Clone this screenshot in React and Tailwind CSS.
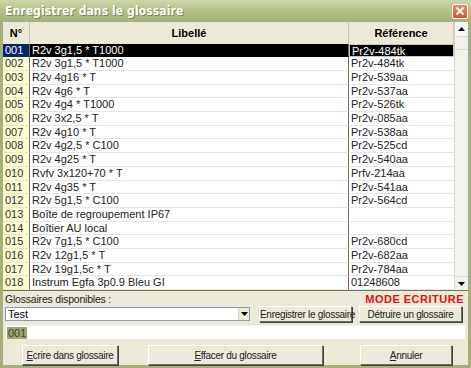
import React from 'react'

const rows = [
  ['001', 'R2v 3g1,5 * T1000', 'Pr2v-484tk'],
  ['002', 'R2v 3g1,5 * T1000', 'Pr2v-484tk'],
  ['003', 'R2v 4g16 * T', 'Pr2v-539aa'],
  ['004', 'R2v 4g6 * T', 'Pr2v-537aa'],
  ['005', 'R2v 4g4 * T1000', 'Pr2v-526tk'],
  ['006', 'R2v 3x2,5 * T', 'Pr2v-085aa'],
  ['007', 'R2v 4g10 * T', 'Pr2v-538aa'],
  ['008', 'R2v 4g2,5 * C100', 'Pr2v-525cd'],
  ['009', 'R2v 4g25 * T', 'Pr2v-540aa'],
  ['010', 'Rvfv 3x120+70 * T', 'Prfv-214aa'],
  ['011', 'R2v 4g35 * T', 'Pr2v-541aa'],
  ['012', 'R2v 5g1,5 * C100', 'Pr2v-564cd'],
  ['013', 'Boîte de regroupement IP67', ''],
  ['014', 'Boîtier AU local', ''],
  ['015', 'R2v 7g1,5 * C100', 'Pr2v-680cd'],
  ['016', 'R2v 12g1,5 * T', 'Pr2v-682aa'],
  ['017', 'R2v 19g1,5c * T', 'Pr2v-784aa'],
  ['018', 'Instrum Egfa 3p0.9 Bleu GI', '01248608'],
]

function Btn({ children, className }) {
  return (
    <button
      className={
        'h-full px-0 whitespace-nowrap bg-[#ece9d8] text-[10px] tracking-[-0.3px] text-[#222] border border-t-white border-l-white border-r-[#716f64] border-b-[#716f64] shadow-[1px_1px_0_#404040] ' +
        className
      }
    >
      {children}
    </button>
  )
}

export default function App() {
  return (
    <div
      className="w-[471px] h-[368px] bg-[#a3b07a] flex flex-col overflow-hidden"
      style={{ fontFamily: '"Liberation Sans", Arial, sans-serif' }}
    >
      {/* title bar */}
      <div className="h-[22px] flex items-center justify-between pl-[5px] pr-[3px] bg-gradient-to-b from-[#cdd5ab] via-[#b3bf88] to-[#a5b27a]">
        <span className="text-white font-bold text-[12px] tracking-[0.1px] [text-shadow:1px_1px_0_#7d8857]" style={{ fontFamily: '"DejaVu Sans Condensed", "DejaVu Sans", sans-serif' }}>
          Enregistrer dans le glossaire
        </span>
        <div className="w-[16px] h-[15px] rounded-[2px] border border-white bg-gradient-to-b from-[#e98a66] to-[#d4542f] flex items-center justify-center">
          <svg width="10" height="10" viewBox="0 0 10 10">
            <path d="M1.5 1.5 L8.5 8.5 M8.5 1.5 L1.5 8.5" stroke="white" strokeWidth="2" />
          </svg>
        </div>
      </div>

      {/* body */}
      <div className="flex-1 mx-[3px] mb-[3px] bg-[#ece9d8] flex flex-col">
        {/* table */}
        <div className="h-[269px] flex border-b border-[#6e7a4d] overflow-hidden">
          <div className="flex-1 flex flex-col overflow-hidden">
            {/* header */}
            <div className="h-[24px] flex text-[11px] font-bold text-black bg-[#ece9d8]">
              <div className="w-[27px] flex items-center justify-center border-r border-[#c9c6b8]">N°</div>
              <div className="w-[319px] flex items-center justify-center border-r border-[#c9c6b8]">Libellé</div>
              <div className="flex-1 flex items-center justify-center border-r border-[#c9c6b8]">Référence</div>
            </div>
            {rows.map((r, i) => {
              const sel = i === 0
              return (
                <div key={r[0]} className="h-[13.7px] shrink-0 flex text-[11px] leading-[13px]">
                  <div
                    className={
                      'w-[27px] pl-[2px] border-r border-[#6d6d6d] border-b ' +
                      (sel ? 'bg-[#0a246a] text-white border-b-[#0a246a]' : 'bg-[#fdfbd1] text-[#333] border-b-[#ebe8c0]')
                    }
                  >
                    {r[0]}
                  </div>
                  <div
                    className={
                      'w-[319px] pl-[2px] border-r border-[#6d6d6d] border-b whitespace-nowrap ' +
                      (sel ? 'bg-black text-white border-b-black' : 'bg-white text-[#222] border-b-[#e6e6e6]')
                    }
                  >
                    {r[1]}
                  </div>
                  <div
                    className={
                      'flex-1 pl-[2px] border-b whitespace-nowrap ' +
                      (sel ? 'bg-black text-white border border-[#c8c8c8]' : 'bg-white text-[#222] border-b-[#e6e6e6]')
                    }
                  >
                    {r[2]}
                  </div>
                </div>
              )
            })}
          </div>
          {/* scrollbar */}
          <div className="w-[14px] bg-[#f3f2ec] border-l border-[#d8d6c8] flex flex-col justify-between">
            <div>
              <div className="h-[15px] bg-[#f6f5ef] border-b border-[#dcdacd] flex items-center justify-center">
                <svg width="7" height="4" viewBox="0 0 7 4"><path d="M0 4 L3.5 0 L7 4Z" fill="#000" /></svg>
              </div>
              <div className="h-[13px] border-b border-[#dcdacd] bg-[#f1f0ea]" />
            </div>
            <div className="h-[14px] flex items-center justify-center border-t border-[#dcdacd]">
              <svg width="7" height="4" viewBox="0 0 7 4"><path d="M0 0 L3.5 4 L7 0Z" fill="#000" /></svg>
            </div>
          </div>
        </div>

        {/* label row */}
        <div className="h-[13px] flex items-end justify-between px-[2px] mt-[1px]">
          <span className="text-[10.5px] tracking-[-0.2px] text-[#222] leading-[12px]">Glossaires disponibles :</span>
          <span className="text-[11px] font-bold text-[#e01010] tracking-[0.5px] leading-[12px] mr-[2px]">MODE ECRITURE</span>
        </div>

        {/* combo + buttons */}
        <div className="h-[16px] mt-[1px] flex items-center pl-[2px] pr-[2px]">
          <div className="w-[245px] h-[14px] bg-white border border-[#7f9db9] flex items-center justify-between">
            <span className="text-[11px] leading-[12px] pl-[2px]">Test</span>
            <div className="w-[11px] h-full bg-[#ece9d8] border-l border-[#d8d5c4] flex items-center justify-center">
              <svg width="7" height="4" viewBox="0 0 7 4"><path d="M0 0 L3.5 4 L7 0Z" fill="#000" /></svg>
            </div>
          </div>
          <div className="w-[9px]" />
          <Btn className="w-[93px]">Enregistrer le glossaire</Btn>
          <div className="w-[7px]" />
          <Btn className="w-[103px]">Détruire un glossaire</Btn>
        </div>

        {/* selection input */}
        <div className="mt-[3px] mx-[3px] h-[14px] bg-white border-t border-[#f5f4ee] flex items-center">
          <span className="text-[11px] leading-[12px] bg-[#9aa57a] text-[#404a20] px-[1px] ml-[1px]">001</span>
        </div>

        {/* bottom buttons */}
        <div className="mt-[6px] h-[20px] flex">
          <div className="w-[19px]" />
          <Btn className="w-[96px]">
            <u>E</u>crire dans glossaire
          </Btn>
          <div className="w-[30px]" />
          <Btn className="w-[175px]">
            <u>E</u>ffacer du glossaire
          </Btn>
          <div className="w-[37px]" />
          <Btn className="w-[92px]">
            <u>A</u>nnuler
          </Btn>
        </div>
      </div>
    </div>
  )
}
